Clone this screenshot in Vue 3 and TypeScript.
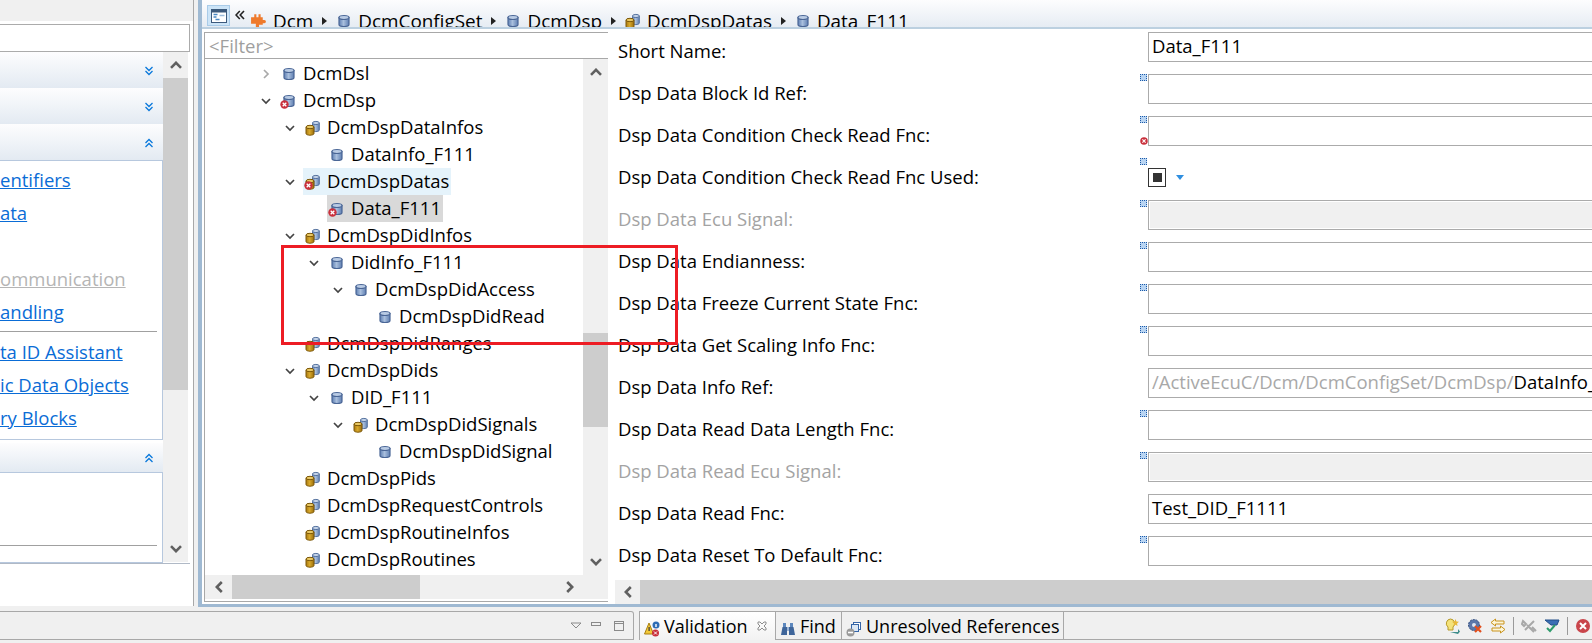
<script setup lang="ts">
interface TreeRow {
  level: number;
  label: string;
  icon: 'cyl' | 'stack';
  arrow?: 'open' | 'closed';
  error?: boolean;
  state?: 'hover' | 'selected';
}

interface FormRow {
  label: string;
  value?: string;
  prefix?: string;
  kind?: 'disabled' | 'check';
  marker?: boolean;
  error?: boolean;
  muted?: boolean;
}

const treeRows: TreeRow[] = [
  { level: 0, label: 'DcmDsl', icon: 'cyl', arrow: 'closed' },
  { level: 0, label: 'DcmDsp', icon: 'cyl', arrow: 'open', error: true },
  { level: 1, label: 'DcmDspDataInfos', icon: 'stack', arrow: 'open' },
  { level: 2, label: 'DataInfo_F111', icon: 'cyl' },
  { level: 1, label: 'DcmDspDatas', icon: 'stack', arrow: 'open', error: true, state: 'hover' },
  { level: 2, label: 'Data_F111', icon: 'cyl', error: true, state: 'selected' },
  { level: 1, label: 'DcmDspDidInfos', icon: 'stack', arrow: 'open' },
  { level: 2, label: 'DidInfo_F111', icon: 'cyl', arrow: 'open' },
  { level: 3, label: 'DcmDspDidAccess', icon: 'cyl', arrow: 'open' },
  { level: 4, label: 'DcmDspDidRead', icon: 'cyl' },
  { level: 1, label: 'DcmDspDidRanges', icon: 'stack' },
  { level: 1, label: 'DcmDspDids', icon: 'stack', arrow: 'open' },
  { level: 2, label: 'DID_F111', icon: 'cyl', arrow: 'open' },
  { level: 3, label: 'DcmDspDidSignals', icon: 'stack', arrow: 'open' },
  { level: 4, label: 'DcmDspDidSignal', icon: 'cyl' },
  { level: 1, label: 'DcmDspPids', icon: 'stack' },
  { level: 1, label: 'DcmDspRequestControls', icon: 'stack' },
  { level: 1, label: 'DcmDspRoutineInfos', icon: 'stack' },
  { level: 1, label: 'DcmDspRoutines', icon: 'stack' },
];

const formRows: FormRow[] = [
  { label: 'Short Name:', value: 'Data_F111' },
  { label: 'Dsp Data Block Id Ref:', marker: true },
  { label: 'Dsp Data Condition Check Read Fnc:', marker: true, error: true },
  { label: 'Dsp Data Condition Check Read Fnc Used:', marker: true, kind: 'check' },
  { label: 'Dsp Data Ecu Signal:', marker: true, kind: 'disabled', muted: true },
  { label: 'Dsp Data Endianness:', marker: true },
  { label: 'Dsp Data Freeze Current State Fnc:', marker: true },
  { label: 'Dsp Data Get Scaling Info Fnc:', marker: true },
  { label: 'Dsp Data Info Ref:', prefix: '/ActiveEcuC/Dcm/DcmConfigSet/DcmDsp/', value: 'DataInfo_F111' },
  { label: 'Dsp Data Read Data Length Fnc:', marker: true },
  { label: 'Dsp Data Read Ecu Signal:', marker: true, kind: 'disabled', muted: true },
  { label: 'Dsp Data Read Fnc:', value: 'Test_DID_F1111' },
  { label: 'Dsp Data Reset To Default Fnc:', marker: true },
];

const crumbs = [
  { icon: 'cyl', label: 'DcmConfigSet' },
  { icon: 'cyl', label: 'DcmDsp' },
  { icon: 'stack', label: 'DcmDspDatas' },
  { icon: 'cyl', label: 'Data_F111' },
];
</script>

<template>
  <div class="app">
    <svg class="sprite" width="0" height="0">
      <defs>
        <linearGradient id="blueBody" x1="0" x2="1" y1="0" y2="0">
          <stop offset="0" stop-color="#5f80b4" />
          <stop offset="0.45" stop-color="#a9bfdd" />
          <stop offset="1" stop-color="#5f7fb2" />
        </linearGradient>
        <linearGradient id="goldBody" x1="0" x2="1" y1="0" y2="0">
          <stop offset="0" stop-color="#a87a10" />
          <stop offset="0.45" stop-color="#d9a92c" />
          <stop offset="1" stop-color="#9a6f0c" />
        </linearGradient>
        <symbol id="cyl" viewBox="0 0 16 16">
          <path d="M3 4.500v7c0 1.200 2.200 2 5 2s5-.8 5-2v-7z" fill="url(#blueBody)" stroke="#4a6696" stroke-width="1.200" />
          <ellipse cx="8" cy="4.500" rx="5" ry="2" fill="#b9cbe4" stroke="#4a6696" stroke-width="1.200" />
        </symbol>
        <symbol id="stack" viewBox="0 0 16 16">
          <path d="M7.500 3v7c0 1 1.400 1.600 3.300 1.600s3.500-.6 3.500-1.600V3z" fill="url(#blueBody)" stroke="#55729f" />
          <ellipse cx="10.900" cy="3" rx="3.400" ry="1.600" fill="#c3d2e8" stroke="#55729f" />
          <path d="M1 7v6.500c0 1 1.800 1.700 4 1.700s4-.7 4-1.700V7z" fill="url(#goldBody)" stroke="#7c5708" />
          <ellipse cx="5" cy="7" rx="4" ry="1.700" fill="#e9c863" stroke="#7c5708" />
        </symbol>
        <symbol id="err" viewBox="0 0 9 9">
          <circle cx="4.500" cy="4.500" r="4.200" fill="#c9303c" />
          <path d="M2.700 2.700l3.600 3.600M6.300 2.700L2.700 6.300" stroke="#fff" stroke-width="1.300" />
        </symbol>
        <symbol id="chevUp" viewBox="0 0 12 8">
          <path d="M1 6.800l5-5 5 5" fill="none" stroke="#606060" stroke-width="2.600" />
        </symbol>
      </defs>
    </svg>

    <div class="main">
      <aside class="nav">
        <div class="nav-top"></div>
        <div class="nav-white">
          <div class="nav-search"></div>
          <div class="nav-scroll">
            <div class="nav-sections">
              <div class="sec-head">
                <svg class="twist" viewBox="0 0 10 10"><path d="M1.500 1l3.500 3.500L8.500 1M1.500 5l3.500 3.500L8.500 5" /></svg>
              </div>
              <div class="sec-head">
                <svg class="twist" viewBox="0 0 10 10"><path d="M1.500 1l3.500 3.500L8.500 1M1.500 5l3.500 3.500L8.500 5" /></svg>
              </div>
              <div class="sec-head">
                <svg class="twist" viewBox="0 0 10 10"><path d="M1.500 5L5 1.500 8.500 5M1.500 9L5 5.500 8.500 9" /></svg>
              </div>
              <div class="sec-body links">
                <a>entifiers</a>
                <a>ata</a>
                <span class="link-gap"></span>
                <a class="off">ommunication</a>
                <a>andling</a>
                <hr class="sep" />
                <a>ta ID Assistant</a>
                <a>ic Data Objects</a>
                <a>ry Blocks</a>
              </div>
              <div class="sec-head last">
                <svg class="twist" viewBox="0 0 10 10"><path d="M1.500 5L5 1.500 8.500 5M1.500 9L5 5.500 8.500 9" /></svg>
              </div>
              <div class="sec-body tail">
                <hr class="sep" />
              </div>
            </div>
            <div class="vbar nav-bar">
              <button class="bar-btn"><svg><use href="#chevUp" /></svg></button>
              <div class="nav-thumb"></div>
              <div class="bar-fill"></div>
              <button class="bar-btn flip"><svg><use href="#chevUp" /></svg></button>
            </div>
          </div>
        </div>
      </aside>

      <section class="editor">
        <header class="crumbs">
          <span class="outline-btn">
            <svg viewBox="0 0 16 14" width="16" height="14">
              <rect x="0.500" y="0.500" width="15" height="13" fill="#fff" stroke="#3c5a7d" />
              <rect x="0.500" y="0.500" width="15" height="3" fill="#3c5a7d" />
              <path d="M2.500 5.500h4M2.500 8h3M4.500 10.500h4" stroke="#4a89c4" stroke-width="1.500" />
              <path d="M8.500 6.500h5" stroke="#9bbcdc" stroke-width="1.500" />
            </svg>
          </span>
          <svg class="back" viewBox="0 0 10 10" width="10" height="10">
            <path d="M4.800 1L1 5l3.800 4M9 1L5.200 5 9 9" fill="none" stroke="#222" stroke-width="1.600" />
          </svg>
          <svg class="puzzle" viewBox="0 0 16 14" width="17" height="15">
            <path d="M1 4h3V1h2v3h2V1h2v3h2v2.500h1.500a1.500 1.500 0 0 1 0 3H12V11H8.500v2.500h-3V10H1z" fill="#ee7a2c" />
          </svg>
          <span class="crumb-text first">Dcm</span>
          <template v-for="c in crumbs" :key="c.label">
            <span class="crumb-arrow"></span>
            <svg class="tree-icon"><use :href="'#' + c.icon" /></svg>
            <span class="crumb-text">{{ c.label }}</span>
          </template>
        </header>

        <div class="split">
          <div class="tree-pane">
            <div class="filter">&lt;Filter&gt;</div>
            <div class="tree-area">
              <ul class="tree">
                <li v-for="r in treeRows" :key="r.label" class="tree-row" :style="{ paddingLeft: r.level * 24 + 'px' }">
                  <span class="arrow-slot">
                    <svg v-if="r.arrow" viewBox="0 0 10 10" :class="['arrow', r.arrow]">
                      <path v-if="r.arrow === 'open'" d="M1 3l4 4 4-4" />
                      <path v-else d="M3 1l4 4-4 4" />
                    </svg>
                  </span>
                  <span :class="['tree-item', r.state]">
                    <span class="icon-wrap">
                      <svg class="tree-icon"><use :href="'#' + r.icon" /></svg>
                      <svg v-if="r.error" class="err-badge"><use href="#err" /></svg>
                    </span>
                    {{ r.label }}
                  </span>
                </li>
              </ul>
              <div class="vbar tree-bar">
                <button class="bar-btn"><svg><use href="#chevUp" /></svg></button>
                <div class="bar-fill tree-upper"></div>
                <div class="tree-thumb"></div>
                <div class="bar-fill"></div>
                <button class="bar-btn flip"><svg><use href="#chevUp" /></svg></button>
              </div>
            </div>
            <div class="hbar tree-hbar">
              <button class="bar-btn-h left"><svg><use href="#chevUp" /></svg></button>
              <div class="tree-hthumb"></div>
              <div class="bar-fill"></div>
              <button class="bar-btn-h right"><svg><use href="#chevUp" /></svg></button>
              <div class="bar-corner"></div>
            </div>
          </div>

          <div class="form-pane">
            <div class="form">
              <div v-for="f in formRows" :key="f.label" class="form-row">
                <label :class="{ muted: f.muted }">{{ f.label }}</label>
                <div class="field-wrap">
                  <span v-if="f.marker" class="marker"></span>
                  <svg v-if="f.error" class="field-err"><use href="#err" /></svg>
                  <div v-if="f.kind === 'check'" class="check-line">
                    <span class="check"><i></i></span>
                    <span class="drop"></span>
                  </div>
                  <div v-else :class="['field', f.kind]">
                    <span v-if="f.prefix" class="prefix">{{ f.prefix }}</span>{{ f.value }}
                  </div>
                </div>
              </div>
            </div>
            <div class="hbar form-hbar">
              <button class="bar-btn-h left"><svg><use href="#chevUp" /></svg></button>
              <div class="bar-thumb-h"></div>
            </div>
          </div>
        </div>
      </section>
    </div>

    <footer class="bottom">
      <div class="bottom-left">
        <svg class="view-ctl" viewBox="0 0 60 12" width="60" height="12">
          <path d="M1 3h10L6 8z" fill="none" stroke="#8a8a8a" />
          <rect x="21.500" y="2.500" width="9" height="3" fill="none" stroke="#8a8a8a" />
          <rect x="44.500" y="1.500" width="9" height="9" fill="none" stroke="#8a8a8a" />
          <path d="M44.500 3.500h9" stroke="#8a8a8a" />
        </svg>
      </div>
      <div class="bottom-right">
        <div class="tab active">
          <span class="tab-icon">
            <svg viewBox="0 0 16 16" width="16" height="16">
              <path d="M5 2L0.500 13h9z" fill="#f3c93a" stroke="#a97f10" />
              <rect x="4.500" y="6" width="1.200" height="4" fill="#333" />
              <circle cx="12" cy="4" r="3.500" fill="#2f6db5" />
              <rect x="11.300" y="3" width="1.400" height="3" fill="#fff" />
              <circle cx="11.500" cy="12" r="3.500" fill="#c9303c" />
              <path d="M10 10.500l3 3M13 10.500l-3 3" stroke="#fff" />
            </svg>
          </span>
          Validation
          <svg class="tab-close" viewBox="0 0 10 10" width="10" height="10">
            <path d="M1 1l2 0 2 2 2-2 2 0 0 2-2 2 2 2 0 2-2 0-2-2-2 2-2 0 0-2 2-2-2-2z" fill="none" stroke="#8d8d8d" />
          </svg>
        </div>
        <div class="tab find">
          <span class="tab-icon">
            <svg viewBox="0 0 16 16" width="16" height="16">
              <rect x="3" y="2" width="3" height="5" fill="#5c87bd" />
              <rect x="10" y="2" width="3" height="5" fill="#5c87bd" />
              <path d="M2.500 6h4.500v8H1z M9 6h4.500L15 14H9z" fill="#3e659a" />
              <rect x="7" y="6" width="2" height="4" fill="#9db6d6" />
            </svg>
          </span>
          Find
        </div>
        <div class="tab refs">
          <span class="tab-icon">
            <svg viewBox="0 0 16 16" width="16" height="16">
              <rect x="7.500" y="1.500" width="7" height="7" fill="#fff" stroke="#3565a8" />
              <rect x="5.500" y="3.500" width="7" height="7" fill="#dce8f5" stroke="#3565a8" />
              <circle cx="4.500" cy="11.500" r="4" fill="#9a9a9a" />
              <rect x="2" y="10.700" width="5" height="1.600" fill="#fff" />
            </svg>
          </span>
          Unresolved References
        </div>
        <div class="tab-rest">
          <svg class="tool" viewBox="0 0 16 16"><path d="M6.500 1a4.500 4.500 0 0 0-2.500 8v3h5V9a4.500 4.500 0 0 0-2.500-8z" fill="#f4e27a" stroke="#b69a2a" /><path d="M11.500 1l1 2.500 2.500.3-2 1.700.6 2.500-2.100-1.300-2.100 1.300.6-2.500-2-1.700 2.500-.3z" fill="#e8b93a" /><path d="M6 14h8v-3l2 2.500-2 2.500z" fill="#3d8c8a" /></svg>
          <svg class="tool" viewBox="0 0 16 16"><circle cx="7" cy="7" r="5.500" fill="#5b77aa" stroke="#2f4a7c" stroke-dasharray="2 1" /><circle cx="7" cy="7" r="2" fill="#dfe7f2" /><path d="M8 8l6 6M14 8l-6 6" stroke="#e2501e" stroke-width="2.200" /></svg>
          <svg class="tool" viewBox="0 0 16 16"><path d="M5.500 1L1 4.500 5.500 8V6H14V3H5.500zM10.500 8l4.500 3.500-4.500 3.500v-2H2v-3h8.500z" fill="#fdf6d8" stroke="#c9931e" /></svg>
          <span class="tool-sep"></span>
          <svg class="tool" viewBox="0 0 16 16"><path d="M2 3l3 3-2 2-2-2zM6 7l7 7M13 3l-9 9M11 9l4 4" fill="none" stroke="#a8a8a8" stroke-width="2" /></svg>
          <svg class="tool" viewBox="0 0 16 16"><path d="M1 2h14l-2 5H7z" fill="#3a6fb5" stroke="#234f88" /><path d="M3 10l3 3 5-6" fill="none" stroke="#2f9c6c" stroke-width="2" /></svg>
          <span class="tool-sep"></span>
          <svg class="tool" viewBox="0 0 16 16"><circle cx="8" cy="8" r="7" fill="#c9454b" /><path d="M5 5l6 6M11 5l-6 6" stroke="#fff" stroke-width="2" /></svg>
        </div>
      </div>
    </footer>

    <div class="red-box"></div>
  </div>
</template>

<style>
html, body { margin: 0; background: #fff; overflow: hidden; }
</style>

<style scoped>
.app {
  position: relative;
  width: 1592px;
  height: 643px;
  overflow: hidden;
  display: flex;
  flex-direction: column;
  font-family: "Open Sans", "Noto Sans", sans-serif;
  font-size: 18.5px;
  color: #000;
  background: #f0f0f0;
}
.sprite { position: absolute; }
.main { display: flex; height: 607px; flex: none; background: #f0f0f0; }

/* left navigation view */
.nav { width: 193px; flex: none; display: flex; flex-direction: column; border-right: 1px solid #a8a8a8; margin-bottom: 1px; }
.nav-top { height: 21px; background: #f0f0f0; flex: none; }
.nav-white { flex: 1; background: #fff; padding: 3px 3px 0 0; display: flex; flex-direction: column; }
.nav-search { height: 26px; border: 1px solid #ababab; border-left: 0; flex: none; }
.nav-scroll { height: 511px; display: flex; flex: none; border-bottom: 1px solid #b0b9c6; }
.nav-sections { width: 163px; flex: none; display: flex; flex-direction: column; }
.sec-head {
  height: 36px;
  flex: none;
  display: flex;
  align-items: center;
  justify-content: flex-end;
  padding: 1px 9px 0 0;
  box-sizing: border-box;
  background: linear-gradient(#fdfdfe, #e3eaf2);
}
.sec-head.last { height: 30px; margin-top: 3px; border-bottom: 1px solid #b7c8de; }
.twist { width: 10px; height: 10px; fill: none; stroke: #0a78dc; stroke-width: 1.300; }
.sec-body { border: 1px solid #b7c8de; border-left: 0; background: #fff; box-sizing: border-box; }
.links { height: 280px; display: flex; flex-direction: column; padding-top: 2px; }
.links a, .links .link-gap {
  height: 33px;
  line-height: 33px;
  flex: none;
  color: #0a6cd6;
  align-self: flex-start;
}
.links a { height: 27px; line-height: 27px; margin: 3px 0; text-decoration: underline; white-space: nowrap; }
.links a.off { color: #b5b5b5; }
.sep { border: 0; border-top: 1px solid #a0a0a0; margin: 3px 5px 3px 0; width: 157px; }
.tail { flex: 1; border-top: 0; display: flex; flex-direction: column; justify-content: flex-end; padding-bottom: 16px; }
.tail .sep { margin: 0; }

/* scrollbars */
.vbar { width: 25px; flex: none; display: flex; flex-direction: column; background: #f0f0f0; }
.nav-bar { height: 510px; }
.bar-btn, .bar-btn-h { border: 0; padding: 0; background: #f0f0f0; flex: none; display: flex; align-items: center; justify-content: center; }
.bar-btn { width: 25px; height: 26px; }
.bar-btn svg { width: 12px; height: 8px; }
.bar-btn.flip svg { transform: rotate(180deg); }
.bar-fill { flex: 1; background: #f0f0f0; }
.nav-thumb { height: 312px; background: #cdcdcd; flex: none; }
.hbar { height: 24px; flex: none; display: flex; background: #f0f0f0; }
.bar-btn-h { width: 26px; height: 24px; }
.bar-btn-h svg { width: 12px; height: 8px; }
.bar-btn-h.left svg { transform: rotate(-90deg); }
.bar-btn-h.right svg { transform: rotate(90deg); }
.bar-corner { width: 25px; flex: none; }

/* editor */
.editor {
  flex: 1;
  min-width: 0;
  margin-left: 4px;
  border-left: 4px solid #9fb9d2;
  border-bottom: 3px solid #9fb9d2;
  background: #fff;
  display: flex;
  flex-direction: column;
  box-sizing: border-box;
}
.crumbs {
  height: 29px;
  flex: none;
  box-sizing: border-box;
  overflow: hidden;
  display: flex;
  align-items: flex-start;
  padding: 5px 0 0 5px;
  border-bottom: 2px solid #bcd0e0;
  background: linear-gradient(#fdfdfe, #e6ecf3);
  white-space: nowrap;
}
.outline-btn {
  width: 23px;
  height: 21px;
  flex: none;
  box-sizing: border-box;
  background: #cce4f7;
  border: 1px solid #a9cbe8;
  display: flex;
  align-items: center;
  justify-content: center;
}
.back { margin: 5px 0 0 5px; flex: none; }
.puzzle { margin: 8px 0 0 5px; flex: none; }
.crumb-text { font-size: 18.9px; line-height: 26px; margin-top: 3px; }
.crumb-text.first { margin-left: 6px; }
.crumb-arrow {
  width: 0;
  height: 0;
  flex: none;
  margin: 12px 0 0 9px;
  border-left: 5px solid #222;
  border-top: 4px solid transparent;
  border-bottom: 4px solid transparent;
}
.crumbs .tree-icon { margin: 8px 6px 0 9px; }
.tree-icon { width: 16px; height: 16px; flex: none; display: block; }

.split { flex: 1; min-height: 0; display: flex; padding: 3px 0 0 2px; box-sizing: border-box; }

/* tree */
.tree-pane {
  width: 404px;
  flex: none;
  box-sizing: border-box;
  border: 1px solid #a8a8a8;
  border-right: 0;
  margin-bottom: 2px;
  display: flex;
  flex-direction: column;
}
.filter { height: 26px; line-height: 26px; padding-left: 4px; color: #9f9f9f; border-bottom: 1px solid #a8a8a8; box-sizing: border-box; flex: none; }
.tree-area { flex: 1; min-height: 0; display: flex; }
.tree { list-style: none; margin: 1px 0 0; padding: 0 0 0 48px; flex: 1; min-width: 0; overflow: hidden; }
.tree-row { height: 27px; display: flex; align-items: stretch; white-space: nowrap; }
.arrow-slot { width: 26px; flex: none; display: flex; align-items: center; justify-content: center; }
.arrow { width: 10px; height: 10px; fill: none; stroke: #444; stroke-width: 1.700; }
.arrow.closed { stroke: #a9a9a9; }
.tree-item { display: flex; align-items: center; padding: 0 2px 2px 0; box-sizing: border-box; }
.tree-item.hover { background: #e5f3fb; }
.tree-item.selected { background: #d9d9d9; }
.icon-wrap { position: relative; width: 24px; height: 16px; flex: none; padding-left: 2px; margin-top: 2px; box-sizing: border-box; }
.err-badge { position: absolute; left: 1px; bottom: 0; width: 9px; height: 9px; }
.tree-bar { height: 100%; }
.tree-upper { flex: none; height: 248px; }
.tree-thumb { height: 94px; background: #cdcdcd; flex: none; }
.tree-hbar { margin-bottom: 2px; }
.tree-hthumb { width: 188px; background: #cdcdcd; flex: none; }
.tree-hbar .bar-btn-h.left { width: 27px; }

/* form */
.form-pane { flex: 1; min-width: 0; display: flex; flex-direction: column; }
.form { flex: 1; min-height: 0; overflow: hidden; padding-left: 10px; }
.form-row { height: 42px; display: grid; grid-template-columns: 530px 1fr; }
label { line-height: 38px; white-space: nowrap; display: block; height: 38px; }
label.muted { color: #a3a3a3; }
.field-wrap { position: relative; min-width: 0; }
.field {
  height: 30px;
  line-height: 25px;
  box-sizing: border-box;
  border: 1px solid #ababab;
  border-right: 0;
  padding-left: 3px;
  white-space: nowrap;
  width: 520px;
  background: #fff;
}
.field.disabled { background: #f0f0f0; box-shadow: inset 0 0 0 1px #fff; }
.prefix { color: #a8a8a8; }
.marker {
  position: absolute;
  left: -8px;
  top: 0;
  width: 7px;
  height: 7px;
  box-sizing: border-box;
  background: #b8d4f2;
  border: 1px dotted #1d5aa8;
}
.field-err { position: absolute; left: -8px; top: 21px; width: 8px; height: 8px; }
.check-line { display: flex; align-items: center; height: 30px; padding-top: 8px; box-sizing: border-box; }
.check { width: 18px; height: 19px; box-sizing: border-box; border: 1px solid #333; background: #fff; display: flex; align-items: center; justify-content: center; }
.check i { width: 9px; height: 9px; background: #333; }
.drop { width: 0; height: 0; margin-left: 10px; border-top: 5px solid #2f8fe0; border-left: 4px solid transparent; border-right: 4px solid transparent; }
.form-hbar { margin-left: 7px; }
.form-hbar .bar-btn-h { width: 25px; }
.bar-thumb-h { flex: 1; background: #cdcdcd; }

/* bottom */
.bottom { flex: 1; display: flex; padding-top: 4px; box-sizing: border-box; }
.bottom-left {
  width: 634px;
  flex: none;
  box-sizing: border-box;
  height: 29px;
  border-top: 1px solid #a8a8a8;
  border-right: 1px solid #a8a8a8;
  border-bottom: 1px solid #a8a8a8;
  border-top-right-radius: 3px;
  display: flex;
  align-items: center;
  justify-content: flex-end;
  padding-right: 3px;
}
.bottom-right {
  flex: 1;
  margin-left: 5px;
  height: 29px;
  box-sizing: border-box;
  border-top: 1px solid #a8a8a8;
  border-bottom: 1px solid #a8a8a8;
  border-left: 1px solid #a8a8a8;
  display: flex;
  min-width: 0;
  font-size: 18px;
}
.tab {
  display: flex;
  align-items: center;
  height: 27px;
  padding: 0 0 0 4px;
  box-sizing: border-box;
  border-right: 1px solid #a8a8a8;
  white-space: nowrap;
  flex: none;
}
.tab.active { background: linear-gradient(#fff, #f2f2f2); width: 136px; height: 28px; }
.tab.find { width: 66px; }
.tab.refs { width: 222px; }
.tab-icon { width: 16px; height: 16px; margin-right: 4px; flex: none; }
.tab-close { margin-left: 9px; }
.tab-rest { flex: 1; display: flex; align-items: center; justify-content: flex-end; padding-right: 1px; gap: 7px; }
.tool { width: 16px; height: 16px; flex: none; }
.tool-sep { width: 1px; height: 18px; background: #9a9a9a; flex: none; }

.red-box {
  position: absolute;
  left: 281px;
  top: 245px;
  width: 397px;
  height: 100px;
  box-sizing: border-box;
  border: 3px solid #ed1c24;
  pointer-events: none;
}
</style>
